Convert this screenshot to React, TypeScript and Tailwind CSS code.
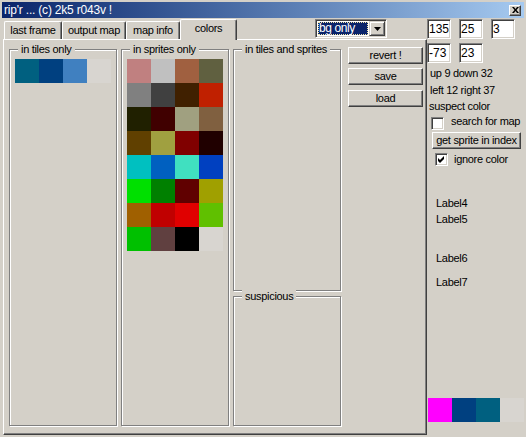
import React from 'react';

const tiles = ['bg-[#006080]', 'bg-[#004080]', 'bg-[#4080c0]', 'bg-[#d8d5d0]'];

const sprites = [
  'bg-[#c08080]', 'bg-[#c0c0c0]', 'bg-[#a06040]', 'bg-[#606040]',
  'bg-[#808080]', 'bg-[#404040]', 'bg-[#402000]', 'bg-[#c02000]',
  'bg-[#202000]', 'bg-[#400000]', 'bg-[#a0a080]', 'bg-[#806040]',
  'bg-[#604000]', 'bg-[#a0a040]', 'bg-[#800000]', 'bg-[#200000]',
  'bg-[#00c0c0]', 'bg-[#0060c0]', 'bg-[#40e0c0]', 'bg-[#0040c0]',
  'bg-[#00e000]', 'bg-[#008000]', 'bg-[#600000]', 'bg-[#a0a000]',
  'bg-[#a06000]', 'bg-[#c00000]', 'bg-[#e00000]', 'bg-[#60c000]',
  'bg-[#00c000]', 'bg-[#604040]', 'bg-[#000000]', 'bg-[#d8d5d0]',
];

const current = ['bg-[#ff00ff]', 'bg-[#004080]', 'bg-[#006080]', 'bg-[#d8d5d0]'];

function Swatches({ colors }: { colors: string[] }) {
  return (
    <div className="grid grid-cols-4 w-[96px]">
      {colors.map((c, i) => (
        <div key={i} className={`h-[24px] ${c}`} />
      ))}
    </div>
  );
}

function Group({ title, className, children }: { title: string; className?: string; children?: React.ReactNode }) {
  return (
    <div className={`relative border border-[#808080] shadow-[inset_1px_1px_0_#fff,1px_1px_0_#fff] ${className ?? ''}`}>
      <span className="absolute left-[8px] -top-[7px] bg-[#d4d0c8] px-[3px] leading-[13px] whitespace-nowrap">{title}</span>
      {children}
    </div>
  );
}

function Button({ className, children }: { className?: string; children: React.ReactNode }) {
  return (
    <button
      type="button"
      className={`flex items-center justify-center bg-[#d4d0c8] border border-t-white border-l-white border-r-[#404040] border-b-[#404040] shadow-[inset_-1px_-1px_0_#808080] leading-[13px] whitespace-nowrap ${className ?? ''}`}
    >
      {children}
    </button>
  );
}

function Edit({ value }: { value: string }) {
  return (
    <div className="w-[24px] h-[20px] flex items-center pl-[1px] bg-white border border-t-[#808080] border-l-[#808080] border-r-white border-b-white shadow-[inset_1px_1px_0_#404040,inset_-1px_-1px_0_#d4d0c8] text-[12px] tracking-normal">
      {value}
    </div>
  );
}

function Check({ checked }: { checked?: boolean }) {
  return (
    <div className="w-[13px] h-[13px] shrink-0 flex items-center justify-center bg-white border border-t-[#808080] border-l-[#808080] border-r-white border-b-white shadow-[inset_1px_1px_0_#404040,inset_-1px_-1px_0_#d4d0c8]">
      {checked && (
        <svg width="7" height="7" viewBox="0 0 7 7">
          <path d="M0 2 L2 4 L6 0 V3 L2 7 L0 5 Z" fill="#000" />
        </svg>
      )}
    </div>
  );
}

function Tab({ label, className, active }: { label: string; className: string; active?: boolean }) {
  if (active) {
    return (
      <div className={`relative z-10 -mb-px h-[21px] pb-[3px] flex items-center justify-center bg-[#d4d0c8] border-l border-t border-r border-l-white border-t-white border-r-[#404040] shadow-[inset_-1px_0_0_#808080] rounded-t-[2px] ${className}`}>
        {label}
      </div>
    );
  }
  return (
    <div className={`h-[18px] flex items-center justify-center border-l border-t border-r border-l-white border-t-white border-r-[#404040] shadow-[inset_-1px_0_0_#808080] rounded-t-[2px] ${className}`}>
      {label}
    </div>
  );
}

export default function App() {
  return (
    <div className="w-[526px] h-[437px] overflow-hidden bg-[#d4d0c8] text-black text-[11px] leading-[13px] tracking-[-0.3px] font-['Liberation_Sans',Arial,sans-serif]">
      {/* title bar */}
      <div className="mt-[2px] mx-[2px] h-[16px] flex items-center pl-[2px] pr-[3px] bg-linear-to-r from-[#0a246a] to-[#a6caf0] text-white text-[12px] tracking-[-0.2px]">
        <span>rip'r ... (c) 2k5 r043v !</span>
        <div className="ml-auto w-[12px] h-[11px] flex items-center justify-center bg-[#d4d0c8] border border-t-white border-l-white border-r-[#404040] border-b-[#404040] shadow-[inset_-1px_-1px_0_#808080]">
          <svg width="7" height="6" viewBox="0 0 7 6">
            <path d="M0 0h2l1.5 2 1.5-2h2L4.5 3 7 6H5L3.5 4 2 6H0l2.5-3z" fill="#000" />
          </svg>
        </div>
      </div>

      <div className="flex">
        {/* left: tabs + panel */}
        <div className="w-[427px] flex flex-col">
          <div className="h-[21px] pl-[4px] flex items-end">
            <Tab label="last frame" className="w-[58px]" />
            <Tab label="output map" className="w-[64px]" />
            <Tab label="map info" className="w-[54px]" />
            <Tab label="colors" className="w-[57px]" active />
            <div className="self-start mt-[1px] ml-[78px] w-[72px] h-[19px] flex bg-white border border-t-[#808080] border-l-[#808080] border-r-white border-b-white shadow-[inset_1px_1px_0_#404040,inset_-1px_-1px_0_#d4d0c8] p-px">
              <div className="flex-1 flex p-px">
                <div className="w-[50px] h-[13px] flex items-center bg-[#0a246a] text-white text-[12px] leading-[11px] tracking-[-0.4px] border border-dotted border-[#efe4a4] whitespace-nowrap">
                  bg only
                </div>
              </div>
              <div className="w-[16px] h-[15px] flex items-center justify-center bg-[#d4d0c8] border border-t-[#d4d0c8] border-l-[#d4d0c8] border-r-[#404040] border-b-[#404040] shadow-[inset_1px_1px_0_#fff,inset_-1px_-1px_0_#808080]">
                <svg width="7" height="4" viewBox="0 0 7 4">
                  <path d="M0 0h7L3.5 4z" fill="#000" />
                </svg>
              </div>
            </div>
          </div>

          <div className="ml-[3px] w-[424px] h-[396px] flex items-start border border-t-white border-l-white border-r-[#404040] border-b-[#404040] shadow-[inset_-1px_-1px_0_#808080]">
            <Group title="in tiles only" className="mt-[9px] ml-[5px] w-[108px] h-[377px]">
              <div className="mt-[9px] ml-[5px]">
                <Swatches colors={tiles} />
              </div>
            </Group>
            <Group title="in sprites only" className="mt-[9px] ml-[4px] w-[108px] h-[377px]">
              <div className="mt-[9px] ml-[5px]">
                <Swatches colors={sprites} />
              </div>
            </Group>
            <div className="mt-[9px] ml-[4px] flex flex-col">
              <Group title="in tiles and sprites" className="w-[108px] h-[242px]" />
              <Group title="suspicious" className="mt-[5px] w-[108px] h-[130px]" />
            </div>
            <div className="mt-[7px] ml-[7px] flex flex-col">
              <Button className="w-[75px] h-[17px]">revert !</Button>
              <Button className="mt-[4px] w-[75px] h-[17px]">save</Button>
              <Button className="mt-[5px] w-[75px] h-[17px]">load</Button>
            </div>
          </div>
        </div>

        {/* right column */}
        <div className="flex-1 flex flex-col">
          <div className="mt-[1px] flex gap-[8px]">
            <Edit value="135" />
            <Edit value="25" />
            <Edit value="3" />
          </div>
          <div className="mt-[4px] flex gap-[8px]">
            <Edit value="-73" />
            <Edit value="23" />
          </div>
          <div className="mt-[2px] ml-[3px] h-[16px] leading-[16px] whitespace-nowrap">up 9 down 32</div>
          <div className="mt-[1px] ml-[3px] h-[16px] leading-[16px] whitespace-nowrap">left 12 right 37</div>
          <div className="ml-[2px] h-[16px] leading-[16px] whitespace-nowrap">suspect color</div>
          <div className="mt-[3px] ml-[4px] flex items-start">
            <Check />
            <span className="ml-[7px] -mt-[2px] whitespace-nowrap">search for map</span>
          </div>
          <Button className="mt-[2px] ml-[5px] w-[89px] h-[17px]">get sprite in index</Button>
          <div className="mt-[4px] ml-[8px] flex items-start">
            <Check checked />
            <span className="ml-[6px] whitespace-nowrap">ignore color</span>
          </div>
          <div className="mt-[29px] ml-[9px] h-[16px] leading-[16px]">Label4</div>
          <div className="ml-[9px] h-[16px] leading-[16px]">Label5</div>
          <div className="mt-[23px] ml-[9px] h-[16px] leading-[16px]">Label6</div>
          <div className="mt-[8px] ml-[9px] h-[16px] leading-[16px]">Label7</div>
          <div className="mt-[108px] ml-[1px]">
            <div className="flex">
              {current.map((c, i) => (
                <div key={i} className={`w-[24px] h-[24px] ${c}`} />
              ))}
            </div>
          </div>
        </div>
      </div>
    </div>
  );
}
